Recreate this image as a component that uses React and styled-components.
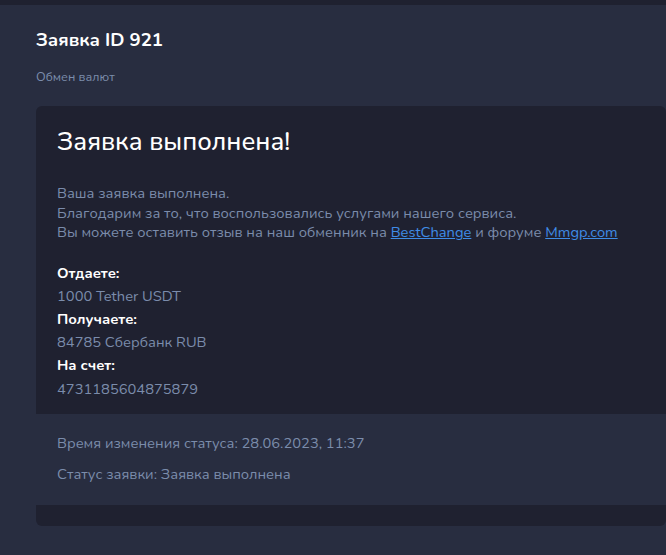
import React from "react";
import styled, { createGlobalStyle } from "styled-components";

const GlobalStyle = createGlobalStyle`
  html, body {
    margin: 0;
    padding: 0;
    background: #282d40;
    overflow: hidden;
  }
  body {
    font-family: "Nunito", Lato, "Noto Sans", sans-serif;
  }
`;

const TopBar = styled.div`
  height: 5px;
  background: #1f2130;
`;

const Page = styled.div`
  padding: 23px 0 30px 36px;
`;

const Title = styled.h1`
  margin: 0;
  font-size: 18.6px;
  font-weight: 700;
  color: #ffffff;
  line-height: 24px;
`;

const Subtitle = styled.div`
  margin-top: 17px;
  font-size: 12.6px;
  color: #7b8cab;
  line-height: 16px;
`;

const Card = styled.div`
  margin-top: 21px;
  background: #1f2130;
  border-radius: 6px;
  overflow: hidden;
`;

const CardBody = styled.div`
  padding: 20px 21px 13px;
`;

const Heading = styled.h2`
  margin: 0;
  font-size: 25.5px;
  font-weight: 500;
  color: #ffffff;
  line-height: 32px;
`;

const Message = styled.p`
  margin: 26px 0 0;
  font-size: 14.7px;
  line-height: 19.5px;
  color: #7b8cab;
`;

const Link = styled.a`
  color: #3f8ce6;
  text-decoration: underline;
`;

const Details = styled.dl`
  margin: 19px 0 0;
`;

const Label = styled.dt`
  font-size: 14.7px;
  font-weight: 700;
  color: #ffffff;
  line-height: 23.2px;
`;

const Value = styled.dd`
  margin: 0;
  font-size: 14.7px;
  color: #7b8cab;
  line-height: 23.2px;
`;

const StatusBlock = styled.div`
  background: #282d40;
  padding: 19px 21px 21px;
  display: flex;
  flex-direction: column;
  gap: 11px;
`;

const StatusLine = styled.div`
  font-size: 14.7px;
  color: #7b8cab;
  line-height: 20px;
`;

const CardFooter = styled.div`
  height: 21px;
`;

export default function App() {
  const details = [
    { label: "Отдаете:", value: "1000 Tether USDT" },
    { label: "Получаете:", value: "84785 Сбербанк RUB" },
    { label: "На счет:", value: "4731185604875879" },
  ];

  return (
    <>
      <GlobalStyle />
      <TopBar />
      <Page>
        <Title>Заявка ID 921</Title>
        <Subtitle>Обмен валют</Subtitle>
        <Card>
          <CardBody>
            <Heading>Заявка выполнена!</Heading>
            <Message>
              Ваша заявка выполнена.
              <br />
              Благодарим за то, что воспользовались услугами нашего сервиса.
              <br />
              Вы можете оставить отзыв на наш обменник на{" "}
              <Link href="#">BestChange</Link> и форуме{" "}
              <Link href="#">Mmgp.com</Link>
            </Message>
            <Details>
              {details.map((item) => (
                <React.Fragment key={item.label}>
                  <Label>{item.label}</Label>
                  <Value>{item.value}</Value>
                </React.Fragment>
              ))}
            </Details>
          </CardBody>
          <StatusBlock>
            <StatusLine>Время изменения статуса: 28.06.2023, 11:37</StatusLine>
            <StatusLine>Статус заявки: Заявка выполнена</StatusLine>
          </StatusBlock>
          <CardFooter />
        </Card>
      </Page>
    </>
  );
}
